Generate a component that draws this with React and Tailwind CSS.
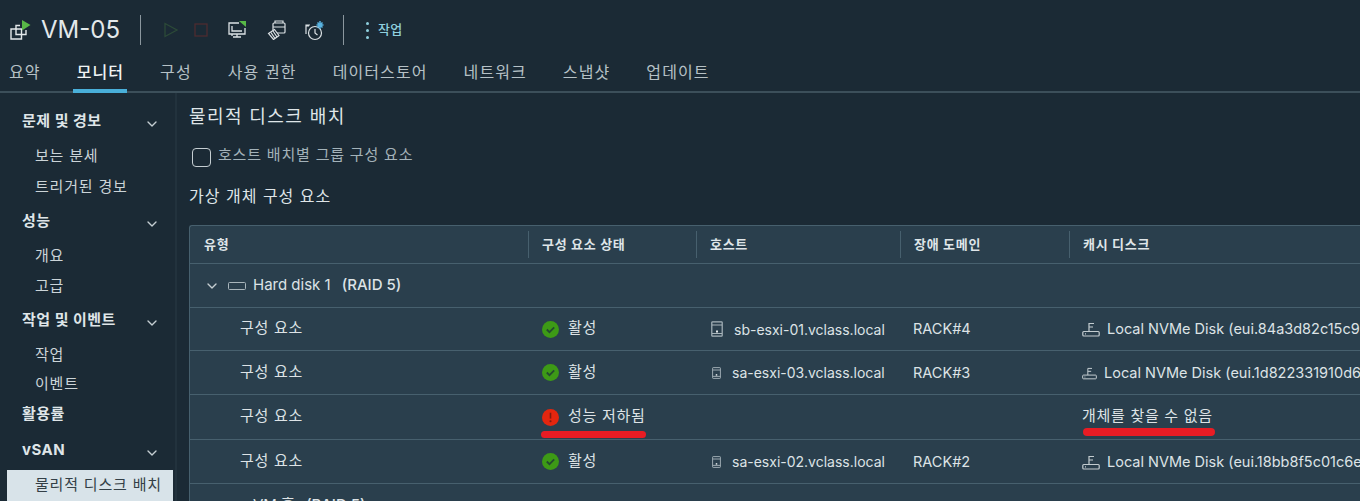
import { ChevronDown } from "lucide-react";

const SIDE = [
    { title: "문제 및 경보", open: true, h: "h-[39px]", items: [["보는 분세", "h-[31px]"], ["트리거된 경보", "h-[30px]"]] },
    { title: "성능", open: true, h: "h-[39px]", items: [["개요", "h-[30px]"], ["고급", "h-[30px]"]] },
    { title: "작업 및 이벤트", open: true, h: "h-[39px]", items: [["작업", "h-[30px]"], ["이벤트", "h-[28px]"]] },
    { title: "활용률", open: false, h: "h-[33px]", items: [] },
    { title: "vSAN", open: true, h: "h-[39px]", items: [["물리적 디스크 배치", "h-[31px]", true]] },
];

const TABS = ["요약", "모니터", "구성", "사용 권한", "데이터스토어", "네트워크", "스냅샷", "업데이트"];

function VmIcon() {
    return (
        <svg width="22" height="22" viewBox="0 0 22 22" fill="none" stroke="#e3e8ea" strokeWidth="1.4">
            <path d="M11 6.5H7v3.5H2v10h10.5v-4.5H17V11" />
            <path d="M7 10v5.5h5.500V10z" />
            <path d="M13 1l8.500 5-8.500 5.500z" fill="#58b947" stroke="none" />
        </svg>
    );
}

function HostIcon({ small }) {
    return (
        <svg width={small ? 9 : 12} height="16" viewBox="0 0 12 16" fill="none" stroke="#a9b6bc" strokeWidth="1.2" className="shrink-0">
            <rect x="0.8" y="0.8" width="10.4" height="14.4" rx="0.8" />
            <path d="M1 4h10M1 12.5h10" />
            <rect x="5" y="9.500" width="2" height="2" fill="#e3e8ea" stroke="none" />
        </svg>
    );
}

function DiskFlashIcon({ small }) {
    return (
        <svg width={small ? 15 : 18} height="16" viewBox="0 0 18 16" fill="none" stroke="#c3ccd0" strokeWidth="1.2" className="shrink-0">
            <rect x="0.8" y="10.500" width="16.4" height="4.500" rx="1" />
            <path d="M7 10.500V2.500h5M7 6h4" />
            <path d="M3 12.800h1" />
        </svg>
    );
}

function VolumeIcon() {
    return (
        <svg width="18" height="8" viewBox="0 0 18 8" fill="none" stroke="#a9b6bc" className="ml-[8px]">
            <rect x="0.5" y="0.5" width="17" height="7" rx="1" />
        </svg>
    );
}

function Status({ bad, children }) {
    return (
        <div className="flex items-center gap-[9px]">
            {bad ? (
                <svg width="17" height="17" viewBox="0 0 16 16" className="shrink-0">
                    <circle cx="8" cy="8" r="8" fill="#e3260f" />
                    <path d="M8 3.500v5.500" stroke="#7d1b10" strokeWidth="1.5" />
                    <circle cx="8" cy="11.500" r="1" fill="#7d1b10" />
                </svg>
            ) : (
                <svg width="17" height="17" viewBox="0 0 16 16" className="shrink-0">
                    <circle cx="8" cy="8" r="8" fill="#3d9a16" />
                    <path d="M4.500 8l2.500 2.500 4.500-4.500" stroke="#234c2e" strokeWidth="1.7" fill="none" />
                </svg>
            )}
            <span className="text-[15px] tracking-[0.7px] -mt-[1px]">{children}</span>
        </div>
    );
}

function Row({ status, bad, host, hostIndent, domain, disk, diskSmall, noDisk, h }) {
    return (
        <div className={`grid grid-cols-[338px_168px_204px_169px_1fr] items-center border-t border-[#47606e] text-[14px] text-[#dde3e6] relative ${h}`}>
            <div className="pl-[50px] pb-[1px] text-[15px] tracking-[0.7px]">구성 요소</div>
            <div className="pl-[14px]"><Status bad={bad}>{status}</Status></div>
            <div className={`flex items-center gap-[11px] ${hostIndent ? "pl-[16px]" : "pl-[15px]"}`}>
                {host && <HostIcon small={hostIndent} />}
                <span className="whitespace-nowrap">{host}</span>
            </div>
            <div className="pl-[13px] text-[14.500px]">{domain}</div>
            <div className="pl-[13px] flex items-center gap-[7px] whitespace-nowrap overflow-hidden text-[14.500px]">
                {disk && <DiskFlashIcon small={diskSmall} />}
                {disk ? <span>{disk}</span> : <span className="text-[15px] tracking-[0.7px] -mt-[2px]">{noDisk}</span>}
            </div>
            {bad && (
                <>
                    <div className="absolute left-[351px] top-[36px] w-[105px] h-[7px] rounded-full bg-[#e81c24]" />
                    <div className="absolute left-[893px] top-[33px] w-[132px] h-[8px] rounded-full bg-[#e81c24]" />
                </>
            )}
        </div>
    );
}

export default function App() {
    return (
        <div className="w-[1360px] h-[501px] overflow-hidden bg-[#1b2a35] text-[#dde3e6] flex flex-col [font-family:Inter,'Noto_Sans_CJK_KR',sans-serif]">
            <div className="flex items-center h-[44px] pt-[16px] shrink-0">
                <div className="ml-[9px]"><VmIcon /></div>
                <span className="ml-[10px] text-[24px] text-[#e3e8ea] leading-none">VM-05</span>
                <div className="ml-[20px] w-[1px] h-[30px] bg-[#8b979e]" />
                <svg width="16" height="16" viewBox="0 0 16 16" fill="none" stroke="#2c4a38" strokeWidth="1.3" className="ml-[22px]"><path d="M2 1.500l12 6.500-12 6.500z" /></svg>
                <svg width="14" height="14" viewBox="0 0 14 14" fill="none" stroke="#4d2c30" strokeWidth="1.3" className="ml-[15px]"><rect x="1" y="1" width="12" height="12" /></svg>
                <svg width="20" height="20" viewBox="0 0 20 20" fill="none" stroke="#dce2e5" strokeWidth="1.3" className="ml-[19px]">
                    <path d="M12 3H2v11h16V8" />
                    <path d="M5 14v2M6 17h8M10 14v3M5 6v5h10" />
                    <path d="M12 1h7v6z" fill="#58b947" stroke="none" />
                </svg>
                <svg width="20" height="20" viewBox="0 0 20 20" fill="none" stroke="#dce2e5" strokeWidth="1.2" className="ml-[20px]">
                    <rect x="6" y="3" width="12" height="10" rx="1" />
                    <path d="M8 3V1h8v2M6 7h12" />
                    <path d="M1.500 13.500l6-4 4.500 6-5.500 4z" fill="#1b2a35" />
                    <path d="M4 12.500l4 6M6 11l4 6" />
                </svg>
                <svg width="21" height="21" viewBox="0 0 21 21" fill="none" stroke="#dce2e5" strokeWidth="1.2" className="ml-[17px]">
                    <circle cx="11" cy="13" r="6.500" />
                    <path d="M11 9v4l2.500 2M6 5H2v9M2 6h3" />
                    <path d="M16 1v8M12.500 5h7M13.500 2.500l5 5M18.500 2.500l-5 5" stroke="#59b4e2" strokeWidth="1.5" />
                </svg>
                <div className="ml-[18px] w-[1px] h-[30px] bg-[#8b979e]" />
                <div className="ml-[22px] flex items-center gap-[9px]">
                    <div className="flex flex-col gap-[4px]">
                        <span className="w-[3px] h-[3px] rounded-full bg-[#8fd0de]" />
                        <span className="w-[3px] h-[3px] rounded-full bg-[#8fd0de]" />
                        <span className="w-[3px] h-[3px] rounded-full bg-[#8fd0de]" />
                    </div>
                    <span className="text-[13px] font-medium tracking-[0.3px] text-[#8fd0de]">작업</span>
                </div>
            </div>

            <div className="flex h-[49px] shrink-0 items-end gap-[36px] border-b-2 border-[#3c4f5a] pl-[9px] text-[16px] tracking-[1.100px] text-[#b6c1c6]">
                {TABS.map((tab, i) => (
                    <div key={tab} className={`h-[35px] leading-[32px] relative ${i === 1 ? "font-medium text-[#f0f4f5]" : ""}`}>
                        {tab}
                        {i === 1 && <div className="absolute left-[-4px] right-[-3px] -bottom-[2px] h-[4px] bg-[#49afd9]" />}
                    </div>
                ))}
            </div>

            <div className="flex flex-1 min-h-0">
                <div className="w-[177px] shrink-0 border-r-[2px] border-[#22323d] pt-[9px]">
                    {SIDE.map(group => (
                        <div key={group.title}>
                            <div className={`flex items-center justify-between pl-[22px] pr-[15px] text-[15px] font-bold tracking-[0.5px] text-[#dfe5e8] ${group.h}`}>
                                <span>{group.title}</span>
                                {group.open && <ChevronDown size={16} strokeWidth={2} className="text-[#c5ced2] mt-[5px]" />}
                            </div>
                            {group.items.map(([label, h, active]) => (
                                <div key={label} className={`flex items-center text-[15px] tracking-[0.8px] pl-[28px] ml-[7px] mr-[2px] whitespace-nowrap ${h} ${active ? "bg-[#d8e3e9] text-[#333f46]" : "text-[#cbd4d8]"}`}>
                                    {label}
                                </div>
                            ))}
                        </div>
                    ))}
                </div>

                <div className="flex-1 min-w-0 pl-[12px]">
                    <div className="text-[18px] leading-[24px] mt-[12px] text-[#dfe5e8] tracking-[1.400px]">물리적 디스크 배치</div>
                    <div className="flex items-center mt-[14px] ml-[3px] gap-[7px] text-[15px] text-[#a3b2b9] tracking-[0.8px]">
                        <div className="w-[19px] h-[19px] rounded-[4px] border border-[#c5ced2] mt-[5px]" />
                        <span className="leading-[20px]">호스트 배치별 그룹 구성 요소</span>
                    </div>
                    <div className="text-[16px] leading-[24px] mt-[17px] text-[#dfe5e8] tracking-[1px]">가상 개체 구성 요소</div>

                    <div className="mt-[17px] border-t border-l border-[#47606e] bg-[#2a3f4d] rounded-tl-[3px]">
                        <div className="grid grid-cols-[338px_168px_204px_169px_1fr] h-[37px] items-center text-[13px] font-bold tracking-[0.7px] text-[#dfe5e8]">
                            {["유형", "구성 요소 상태", "호스트", "장애 도메인", "캐시 디스크"].map((col, i) => (
                                <div key={col} className={`h-[27px] flex items-center ${i === 0 ? "pl-[14px]" : "pl-[13px] border-l border-[#47606e]"}`}>{col}</div>
                            ))}
                        </div>
                        <div className="flex items-center h-[44px] border-t border-[#47606e] text-[15px] text-[#dde3e6]">
                            <ChevronDown size={16} strokeWidth={2} className="ml-[14px] text-[#c5ced2]" />
                            <VolumeIcon />
                            <span className="ml-[7px]">Hard disk 1</span>
                            <span className="ml-[11px] font-medium">(RAID 5)</span>
                        </div>
                        <Row h="h-[43px]" status="활성" host="sb-esxi-01.vclass.local" domain="RACK#4" disk="Local NVMe Disk (eui.84a3d82c15c9" />
                        <Row h="h-[44px]" status="활성" host="sa-esxi-03.vclass.local" hostIndent domain="RACK#3" disk="Local NVMe Disk (eui.1d822331910d6" diskSmall />
                        <Row h="h-[45px]" status="성능 저하됨" bad noDisk="개체를 찾을 수 없음" />
                        <Row h="h-[44px]" status="활성" host="sa-esxi-02.vclass.local" hostIndent domain="RACK#2" disk="Local NVMe Disk (eui.18bb8f5c01c6e" />
                        <div className="flex items-center h-[44px] border-t border-[#47606e] text-[15px] text-[#dde3e6]">
                            <ChevronDown size={16} strokeWidth={2} className="ml-[14px] text-[#c5ced2] -rotate-90" />
                            <VolumeIcon />
                            <span className="ml-[7px]">VM 홈</span>
                            <span className="ml-[11px] font-medium">(RAID 5)</span>
                        </div>
                    </div>
                </div>
            </div>
        </div>
    );
}
